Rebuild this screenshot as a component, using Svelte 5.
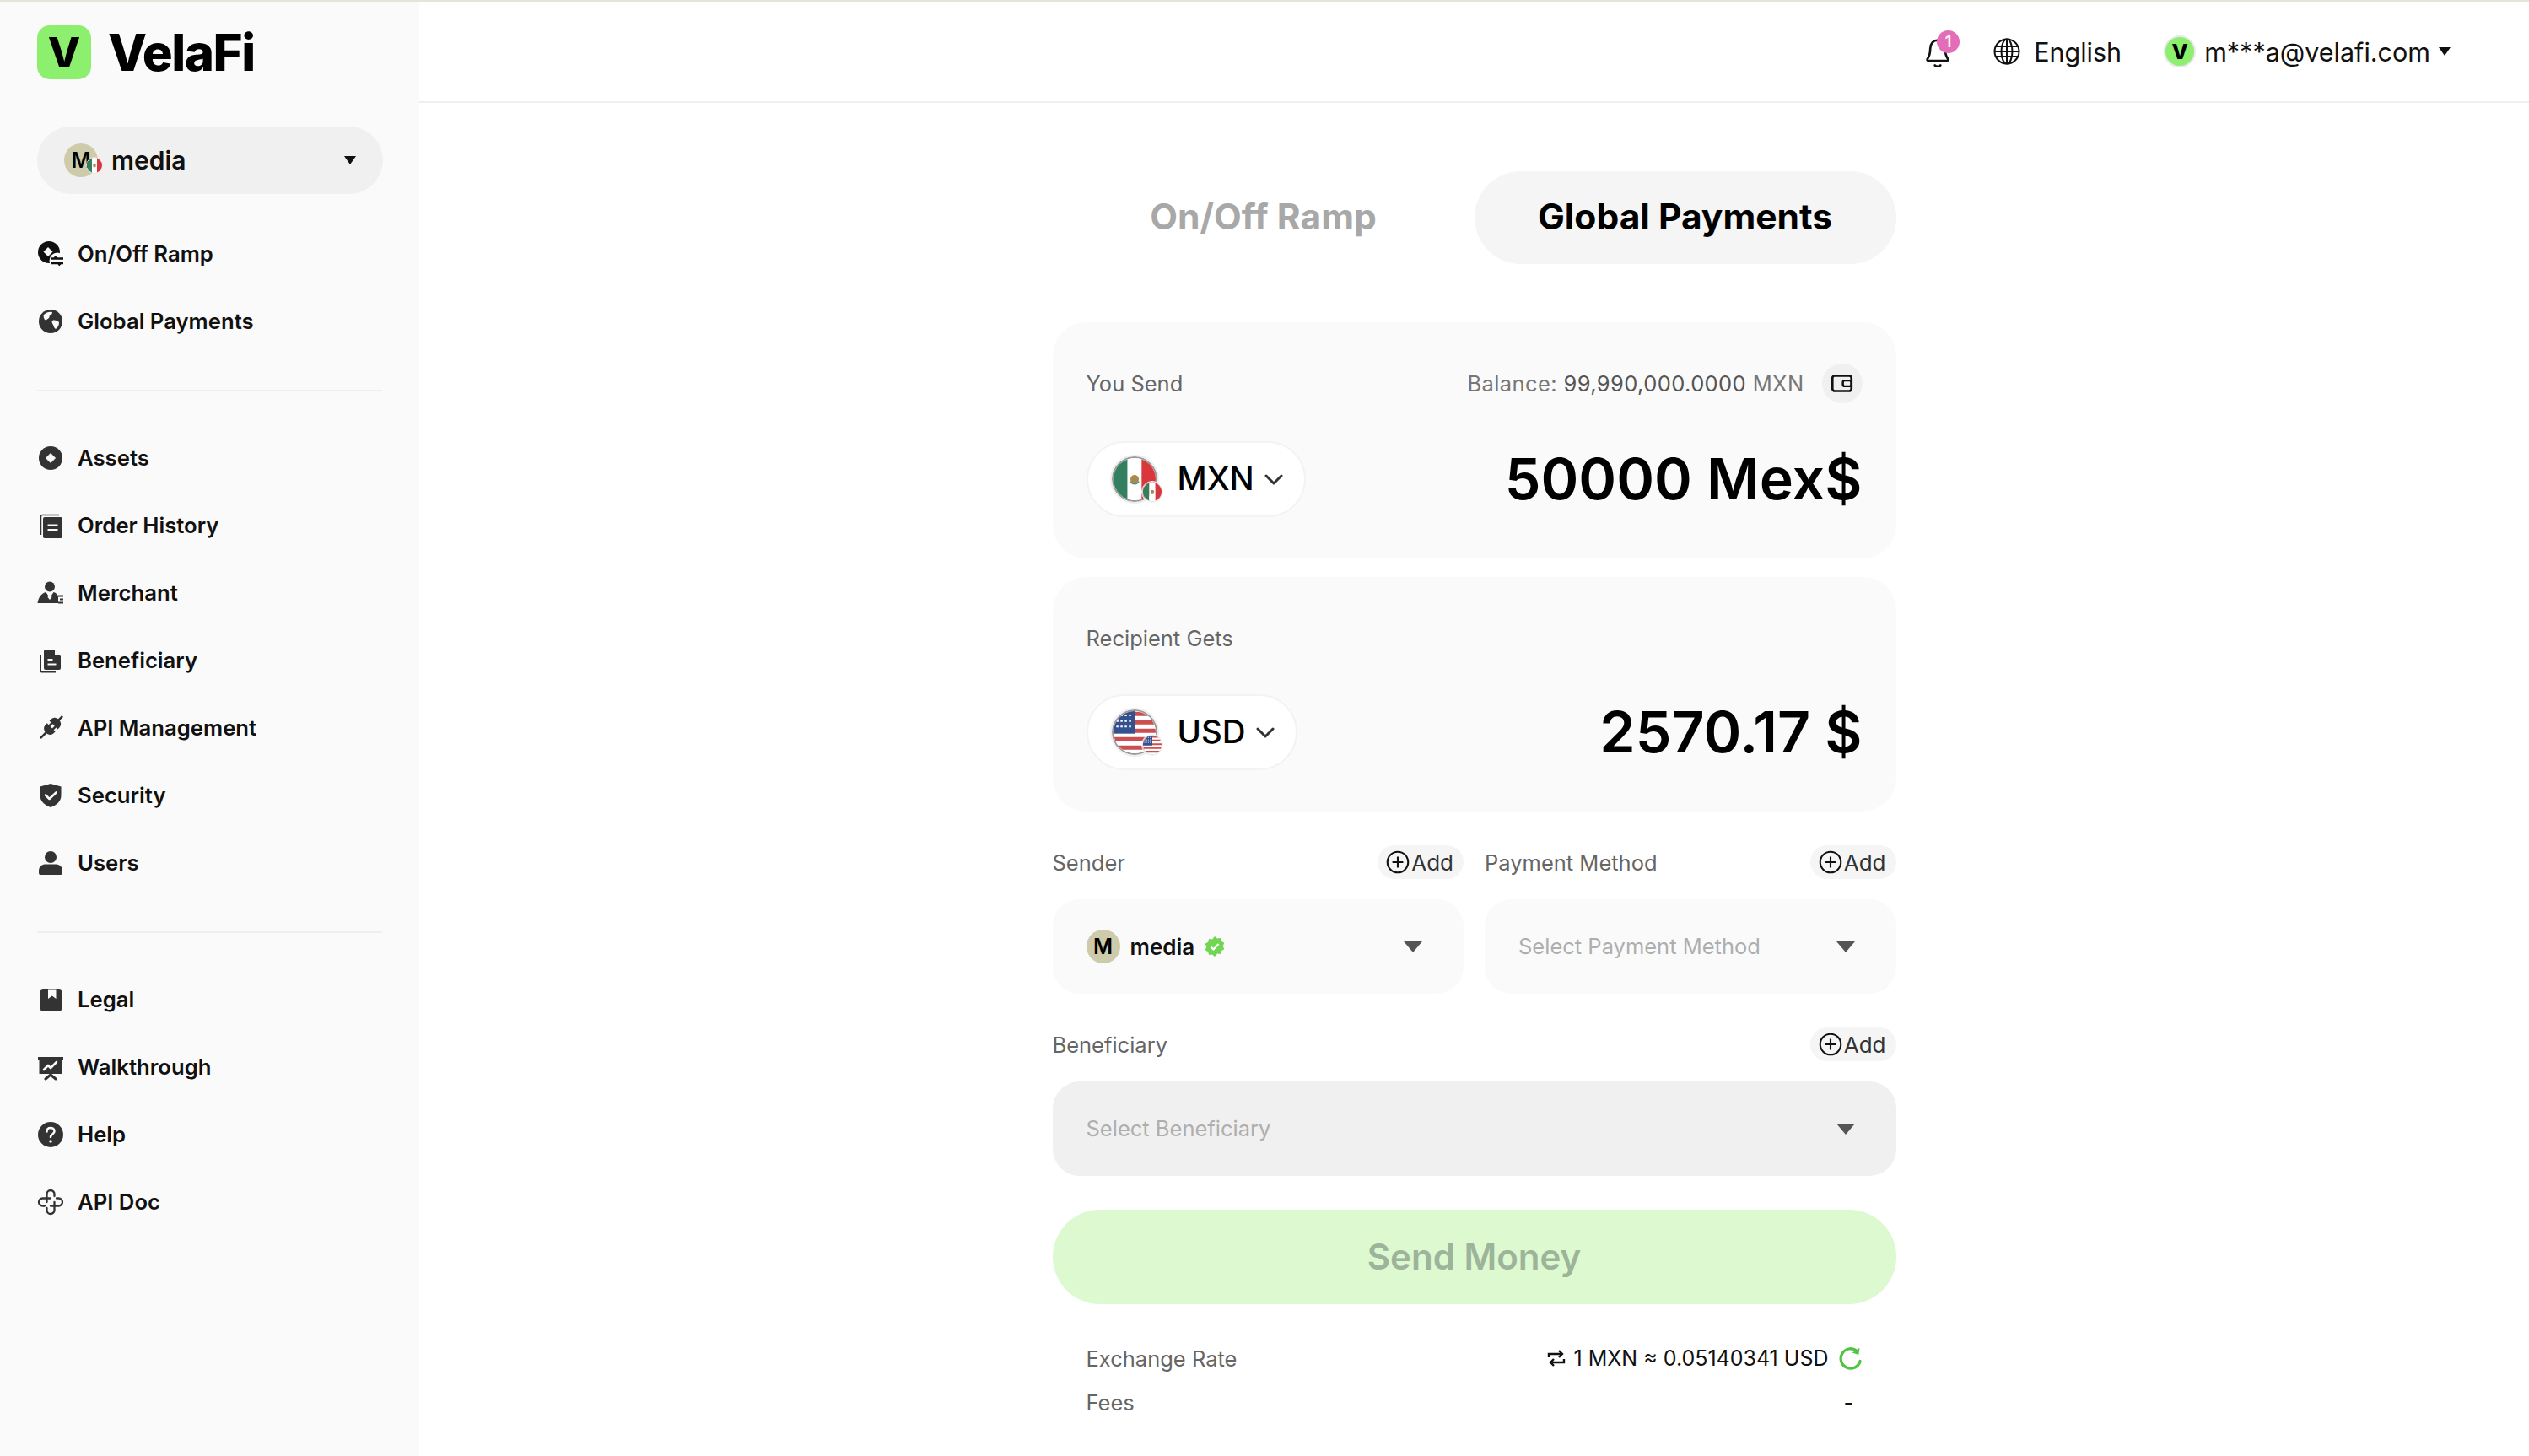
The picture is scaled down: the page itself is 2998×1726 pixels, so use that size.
<script>
  const groups = [
    [{ k: 'ramp', t: 'On/Off Ramp' }, { k: 'globe', t: 'Global Payments' }],
    [
      { k: 'assets', t: 'Assets' },
      { k: 'orders', t: 'Order History' },
      { k: 'merchant', t: 'Merchant' },
      { k: 'benef', t: 'Beneficiary' },
      { k: 'api', t: 'API Management' },
      { k: 'security', t: 'Security' },
      { k: 'users', t: 'Users' }
    ],
    [
      { k: 'legal', t: 'Legal' },
      { k: 'walk', t: 'Walkthrough' },
      { k: 'help', t: 'Help' },
      { k: 'doc', t: 'API Doc' }
    ]
  ];
</script>

{#snippet navIcon(k)}
  <svg class="nav-icon" viewBox="0 0 32 32" aria-hidden="true">
    {#if k === 'ramp'}
      <circle cx="14" cy="14" r="13" fill="#111" />
      <path d="M13 8l5.5 5.5L13 19l-5.5-5.5z" fill="#fafafa" />
      <circle cx="24" cy="24" r="9.5" fill="#fafafa" />
      <path d="M17 21.5h14M20 21.5l2.5-2.5M17 27h14M28 27l-2.5 2.5" fill="none" stroke="#111" stroke-width="2.4" />
    {:else if k === 'globe'}
      <circle cx="16" cy="16" r="14" fill="#333" />
      <path d="M8 8c3-3 7-4 10-3 0 2-1 3-3 4l-1 3c-2 1-3 3-5 2-1-2-2-4-1-6zM18 15c3-1 6 0 8 2 0 3-1 6-4 8-2-1-2-3-3-5-1-2-2-3-1-5z" fill="#fafafa" />
    {:else if k === 'assets'}
      <circle cx="16" cy="16" r="14" fill="#333" />
      <path d="M16 10.500l5.500 5.500-5.500 5.500-5.500-5.500z" fill="#fafafa" stroke="#fafafa" stroke-linejoin="round" />
    {:else if k === 'orders'}
      <path d="M4.500 27V5a1.500 1.500 0 0 1 1.500-1.500h20" fill="none" stroke="#333" stroke-width="1.500" />
      <rect x="7" y="6" width="23" height="25" rx="2" fill="#333" />
      <path d="M12.500 15.500h12M12.500 21h12" stroke="#fafafa" stroke-width="2.200" />
    {:else if k === 'merchant'}
      <circle cx="15" cy="8.500" r="6" fill="#333" />
      <path d="M0.500 28c1-7 5-12 10-13l4.500 7 4.500-7c3 .7 5 3 6.500 6v7z" fill="#333" />
      <path d="M13 15h4l-.8 3 1.300 3-2.500 3-2.500-3 1.300-3z" fill="#fafafa" />
      <path d="M25 19h7v9h-7" fill="#fafafa" />
      <path d="M25 19.500h6M27 23.500h4M25 27.500h6" stroke="#333" stroke-width="1.800" />
    {:else if k === 'benef'}
      <path d="M4 10v18a1.500 1.500 0 0 0 1.500 1.500H22" fill="none" stroke="#333" stroke-width="2" />
      <path d="M8 5a2 2 0 0 1 2-2h10l8 8v14a2 2 0 0 1-2 2H10a2 2 0 0 1-2-2z" fill="#333" />
      <path d="M21 3.500v6.500h6.500z" fill="#fafafa" />
      <path d="M12.500 15h6M12.500 20.500h10" stroke="#fafafa" stroke-width="2" />
    {:else if k === 'api'}
      <g transform="rotate(45 16 16)">
        <path d="M9 11V8a7 6 0 0 1 14 0v3z" fill="#333" />
        <path d="M16 3v-6" stroke="#333" stroke-width="2.600" stroke-linecap="round" />
        <path d="M9 15h14v3a7 6 0 0 1-14 0z" fill="#333" />
        <path d="M13 15v-3.500M19 15v-3.500M16 24v8" stroke="#333" stroke-width="2.600" stroke-linecap="round" />
      </g>
    {:else if k === 'security'}
      <path d="M16 2l12.500 3.500V16c0 7-5.500 11.500-12.500 14C9 27.500 3.500 23 3.500 16V5.500z" fill="#333" />
      <path d="M10 15.500l4.500 4.500 8-7.500" fill="none" stroke="#fafafa" stroke-width="2.600" stroke-linecap="round" stroke-linejoin="round" />
    {:else if k === 'users'}
      <circle cx="16" cy="9" r="7" fill="#333" />
      <path d="M2 25c0-5 4-7.500 8-7.500h12c4 0 8 2.500 8 7.500v3a2 2 0 0 1-2 2H4a2 2 0 0 1-2-2z" fill="#333" />
    {:else if k === 'legal'}
      <rect x="4" y="3" width="25" height="27" rx="3" fill="#333" />
      <path d="M13 3.500h9.500V15l-4.700-3.500-4.800 3.500z" fill="#fafafa" />
    {:else if k === 'walk'}
      <path d="M1 4h30v3.500h-1.500V24h-27V7.500H1z" fill="#333" />
      <path d="M8 19l5-5 3 3 7-7" fill="none" stroke="#fafafa" stroke-width="2.600" stroke-linecap="round" stroke-linejoin="round" />
      <path d="M10 30l6-5 6 5" fill="none" stroke="#333" stroke-width="3" stroke-linecap="round" />
    {:else if k === 'help'}
      <circle cx="16" cy="16" r="15" fill="#333" />
      <path d="M11.500 12.500c0-3 2-4.500 4.500-4.500s4.500 1.600 4.500 4c0 3.500-4.500 3.500-4.500 7" fill="none" stroke="#fafafa" stroke-width="2.600" stroke-linecap="round" />
      <circle cx="16" cy="24" r="1.800" fill="#fafafa" />
    {:else if k === 'doc'}
      <path d="M11.500 16V6.500a4.500 4.500 0 0 1 9 0V9M16 20.500h9.500a4.500 4.500 0 0 0 0-9H23M20.500 16v9.500a4.500 4.500 0 0 1-9 0V23M16 11.500H6.500a4.500 4.500 0 0 0 0 9H9" fill="none" stroke="#333" stroke-width="2.300" stroke-linecap="round" />
    {/if}
  </svg>
{/snippet}

{#snippet mexico()}
  <svg viewBox="0 0 30 30" aria-hidden="true">
    <rect width="10" height="30" fill="#32805f" />
    <rect x="10" width="10" height="30" fill="#fff" />
    <rect x="20" width="10" height="30" fill="#d8383d" />
    <circle cx="15" cy="15" r="3" fill="#a98a4a" />
    <path d="M12 16.500c1 2.500 5 2.500 6 0" fill="none" stroke="#5d9178" stroke-width="1" />
  </svg>
{/snippet}

{#snippet usa()}
  <svg viewBox="0 0 30 30" aria-hidden="true">
    <rect width="30" height="30" fill="#fff" />
    <path d="M0 2h30M0 8h30M0 14h30M0 20h30M0 26h30" stroke="#cc4f50" stroke-width="3" />
    <rect width="15" height="16" fill="#34518e" />
    <path d="M2 3h11M2 7h11M2 11h11" stroke="#fff" stroke-width="1.200" stroke-dasharray="1.500 1.500" />
  </svg>
{/snippet}

{#snippet coin(flag)}
  <span class="coin">
    <span class="flag big">{@render flag()}</span>
    <span class="flag small">{@render flag()}</span>
  </span>
{/snippet}

{#snippet add()}
  <button class="add">
    <svg viewBox="0 0 24 24" aria-hidden="true">
      <circle cx="12" cy="12" r="10.500" fill="none" stroke="#111" stroke-width="1.800" />
      <path d="M12 6.500v11M6.500 12h11" stroke="#111" stroke-width="1.800" />
    </svg>
    <span>Add</span>
  </button>
{/snippet}

{#snippet chevron()}
  <svg class="chev" viewBox="0 0 22 13" aria-hidden="true">
    <path d="M2 2l9 9 9-9" fill="none" stroke="#333" stroke-width="3" stroke-linecap="round" stroke-linejoin="round" />
  </svg>
{/snippet}

{#snippet caret()}
  <svg class="caret" viewBox="0 0 24 14" aria-hidden="true"><path d="M1 1h22L12 14z" fill="#555" /></svg>
{/snippet}

<div class="app">
  <aside>
    <div class="logo">
      <span class="mark">V</span>
      <span class="word">VelaFi</span>
    </div>
    <div class="org">
      <span class="avatar">M<span class="flag tiny">{@render mexico()}</span></span>
      <span class="org-name">media</span>
      <svg class="org-caret" viewBox="0 0 14 10" aria-hidden="true"><path d="M0 0h14L7 10z" fill="#111" /></svg>
    </div>
    {#each groups as group, i}
      {#if i > 0}<hr />{/if}
      <nav>
        {#each group as item}
          <div class="nav-item">{@render navIcon(item.k)}<span>{item.t}</span></div>
        {/each}
      </nav>
    {/each}
  </aside>

  <div class="main">
    <header>
      <span class="bell">
        <svg viewBox="0 0 32 40" aria-hidden="true">
          <path d="M5 28c2-3 3-5 3-11 0-5 3-9 8-9s8 4 8 9c0 6 1 8 3 11 .6 1 0 2-1 2H6c-1 0-1.600-1-1-2z" fill="none" stroke="#111" stroke-width="2.400" />
          <path d="M13 35c1.500 1.500 4.500 1.500 6 0" fill="none" stroke="#111" stroke-width="2.400" stroke-linecap="round" />
        </svg>
        <span class="badge">1</span>
      </span>
      <span class="lang">
        <svg viewBox="0 0 32 32" aria-hidden="true">
          <g fill="none" stroke="#111" stroke-width="2">
            <circle cx="16" cy="16" r="14.500" />
            <ellipse cx="16" cy="16" rx="6.500" ry="14.500" />
            <path d="M16 1.500v29M3 10h26M3 22h26M1.500 16h29" />
          </g>
        </svg>
        English
      </span>
      <span class="user">
        <span class="user-mark">V</span>
        m***a@velafi.com
        <svg class="user-caret" viewBox="0 0 14 10" aria-hidden="true"><path d="M0 0h14L7 10z" fill="#111" /></svg>
      </span>
    </header>

    <main>
      <div class="tabs">
        <div class="tab">On/Off Ramp</div>
        <div class="tab active">Global Payments</div>
      </div>

      <section class="card send">
        <div class="top">
          <span class="label">You Send</span>
          <span class="balance">
            <span>Balance: <b>99,990,000.0000</b> MXN</span>
            <span class="wallet">
              <svg viewBox="0 0 24 24" aria-hidden="true">
                <rect x="2" y="4" width="20" height="16" rx="2.500" fill="none" stroke="#111" stroke-width="2.400" />
                <rect x="13" y="9" width="9" height="6" rx="2" fill="none" stroke="#111" stroke-width="2.200" />
              </svg>
            </span>
          </span>
        </div>
        <div class="line">
          <div class="pill">{@render coin(mexico)}<span class="code">MXN</span>{@render chevron()}</div>
          <div class="amount">50000 Mex$</div>
        </div>
      </section>

      <section class="card">
        <div class="top"><span class="label">Recipient Gets</span></div>
        <div class="line">
          <div class="pill">{@render coin(usa)}<span class="code">USD</span>{@render chevron()}</div>
          <div class="amount">2570.17 $</div>
        </div>
      </section>

      <div class="pair">
        <div>
          <div class="field-head"><span class="label">Sender</span>{@render add()}</div>
          <div class="select">
            <span class="sender">
              <span class="avatar small-av">M</span>
              <strong>media</strong>
              <svg class="verified" viewBox="0 0 24 24" aria-hidden="true">
                <path d="M12 0l3 2.500 3.900-.5 1 3.800 3.400 2-1.500 3.700 1.500 3.700-3.400 2-1 3.800-3.900-.5L12 24l-3-2.500-3.900.5-1-3.800-3.400-2 1.500-3.700L.7 8.800l3.400-2 1-3.800 3.900.5z" fill="#72d653" />
                <path d="M7.500 12.500l3 3 6-6.500" fill="none" stroke="#fff" stroke-width="2.200" />
              </svg>
            </span>
            {@render caret()}
          </div>
        </div>
        <div>
          <div class="field-head"><span class="label">Payment Method</span>{@render add()}</div>
          <div class="select"><span class="placeholder">Select Payment Method</span>{@render caret()}</div>
        </div>
      </div>

      <div class="field-head benef"><span class="label">Beneficiary</span>{@render add()}</div>
      <div class="select disabled"><span class="placeholder">Select Beneficiary</span>{@render caret()}</div>

      <button class="submit">Send Money</button>

      <div class="info">
        <span class="label">Exchange Rate</span>
        <span class="rate">
          <svg class="swap" viewBox="0 0 24 24" aria-hidden="true">
            <path d="M3 11V7h16M15 3l4 4-4 4M21 13v4H5M9 21l-4-4 4-4" fill="none" stroke="#111" stroke-width="2.400" />
          </svg>
          1 MXN ≈ 0.05140341 USD
          <svg class="refresh" viewBox="0 0 24 24" aria-hidden="true">
            <path d="M18 4.500A10 10 0 1 0 21.500 15" fill="none" stroke="#4fc444" stroke-width="2.800" stroke-linecap="round" />
            <path d="M13.500 6.500L20 8.500l1-7z" fill="#4fc444" />
          </svg>
        </span>
      </div>
      <div class="info">
        <span class="label">Fees</span>
        <span class="dash">-</span>
      </div>
    </main>
  </div>
</div>

<style>
  :global(body) {
    font-family: Inter, 'Noto Sans', sans-serif;
    background: #fff;
    color: #111;
  }
  .app {
    display: flex;
    height: 1726px;
    overflow: hidden;
    border-top: 2px solid #e3e5d8;
    box-sizing: border-box;
  }
  aside {
    width: 497px;
    flex-shrink: 0;
    box-sizing: border-box;
    background: #fafafa;
    padding: 28px 44px 0;
  }
  .logo {
    display: flex;
    align-items: center;
    gap: 20px;
    height: 64px;
  }
  .mark {
    width: 64px;
    height: 64px;
    border-radius: 15px;
    background: #8cf06e;
    display: flex;
    align-items: center;
    justify-content: center;
    font-size: 50px;
    font-weight: 800;
    color: #000;
  }
  .word {
    font-size: 60px;
    font-weight: 800;
    letter-spacing: -1.5px;
    color: #000;
  }
  .org {
    margin-top: 56px;
    height: 80px;
    width: 410px;
    border-radius: 40px;
    background: #f0f0f0;
    display: flex;
    align-items: center;
    padding: 0 32px;
    box-sizing: border-box;
  }
  .avatar {
    position: relative;
    width: 40px;
    height: 40px;
    flex-shrink: 0;
    border-radius: 50%;
    background: #cdcbaa;
    display: flex;
    align-items: center;
    justify-content: center;
    font-size: 25px;
    font-weight: 600;
    color: #000;
  }
  .org-name {
    margin-left: 16px;
    font-size: 30px;
    font-weight: 600;
    flex: 1;
  }
  .org-caret {
    width: 14px;
    height: 10px;
  }
  .flag {
    display: block;
    border-radius: 50%;
    overflow: hidden;
  }
  .flag svg {
    display: block;
    width: 100%;
    height: 100%;
  }
  .flag.tiny {
    position: absolute;
    left: 26px;
    top: 16px;
    width: 20px;
    height: 20px;
    border: 1px solid #e8e8e8;
    box-sizing: border-box;
  }
  nav {
    display: flex;
    flex-direction: column;
    margin-top: 39px;
  }
  aside > nav:nth-of-type(1) {
    margin-top: 31px;
  }
  .nav-item {
    height: 80px;
    display: flex;
    align-items: center;
    gap: 16px;
    font-size: 25.700px;
    font-weight: 600;
    color: #111;
  }
  .nav-item span {
    padding-bottom: 1px;
  }
  .nav-icon {
    width: 32px;
    height: 32px;
    flex-shrink: 0;
  }
  hr {
    border: 0;
    height: 2px;
    background: #efefef;
    margin: 41px 0 0;
  }
  .main {
    flex: 1;
    min-width: 0;
  }
  header {
    height: 118px;
    border-bottom: 2px solid #efefef;
    display: flex;
    align-items: center;
    justify-content: flex-end;
    padding-right: 93px;
    font-size: 30.500px;
    color: #111;
  }
  .bell {
    position: relative;
    width: 36px;
    height: 44px;
    margin-right: 48px;
  }
  .bell svg {
    width: 36px;
    height: 44px;
    display: block;
  }
  .badge {
    position: absolute;
    left: 17px;
    top: -3px;
    width: 27px;
    height: 27px;
    border-radius: 50%;
    background: #e36db8;
    color: #fff;
    font-size: 18px;
    font-weight: 600;
    display: flex;
    align-items: center;
    justify-content: center;
  }
  .lang {
    display: flex;
    align-items: center;
    gap: 16px;
    margin-right: 50px;
  }
  .lang svg {
    width: 32px;
    height: 34px;
  }
  .user {
    display: flex;
    align-items: center;
    gap: 10px;
  }
  .user-mark {
    width: 38px;
    height: 38px;
    border-radius: 50%;
    background: #8cf06e;
    border: 2px solid #e8e8e8;
    box-sizing: border-box;
    display: flex;
    align-items: center;
    justify-content: center;
    font-size: 25px;
    font-weight: 800;
    color: #000;
  }
  .user-caret {
    width: 14px;
    height: 10px;
  }
  main {
    width: 1000px;
    margin: 0 auto;
    padding-top: 81px;
  }
  .tabs {
    display: grid;
    grid-template-columns: 1fr 1fr;
    margin-bottom: 69px;
  }
  .tab {
    height: 110px;
    box-sizing: border-box;
    padding-bottom: 3px;
    border-radius: 55px;
    display: flex;
    align-items: center;
    justify-content: center;
    font-size: 42.500px;
    font-weight: 700;
    color: #a8a8a8;
  }
  .tab.active {
    background: #f5f5f5;
    color: #000;
  }
  .card {
    background: #fafafa;
    border-radius: 40px;
    padding: 49px 40px 49px;
    margin-bottom: 22px;
  }
  .top {
    height: 47px;
    display: flex;
    align-items: center;
    justify-content: space-between;
    margin-bottom: 43px;
  }
  .send .top {
    margin-bottom: 45px;
  }
  .label {
    font-size: 25.500px;
    color: #666;
  }
  .balance {
    display: flex;
    align-items: center;
    font-size: 25.500px;
    letter-spacing: 0.4px;
    color: #777;
  }
  .balance b {
    font-weight: 400;
    color: #555;
  }
  .wallet {
    width: 48px;
    height: 47px;
    margin-left: 21px;
    border-radius: 50%;
    background: #f0f0f0;
    display: flex;
    align-items: center;
    justify-content: center;
  }
  .wallet svg {
    width: 27px;
    height: 27px;
  }
  .line {
    display: flex;
    align-items: center;
    justify-content: space-between;
  }
  .pill {
    height: 90px;
    box-sizing: border-box;
    border: 2px solid #f3f3f3;
    border-radius: 45px;
    background: #fff;
    display: flex;
    align-items: center;
    padding: 0 25px 0 26px;
    font-size: 38.500px;
    font-weight: 500;
    color: #000;
  }
  .code {
    padding-bottom: 3px;
  }
  .coin {
    position: relative;
    width: 62px;
    height: 58px;
    margin-right: 18px;
  }
  .flag.big {
    width: 54px;
    height: 54px;
    box-sizing: border-box;
    border: 2px solid #999;
    outline: 2px solid #eee;
    margin: 2px;
  }
  .flag.small {
    position: absolute;
    left: 38px;
    top: 32px;
    width: 24px;
    height: 24px;
    border: 1px solid #ddd;
    outline: 1px solid #f4f4f4;
    box-sizing: border-box;
  }
  .chev {
    width: 22px;
    height: 13px;
    margin-left: 12px;
  }
  .amount {
    font-size: 68px;
    font-weight: 600;
    color: #000;
    padding-bottom: 3px;
  }
  .pair {
    display: grid;
    grid-template-columns: 1fr 1fr;
    gap: 25px;
    margin-top: 40px;
  }
  .field-head {
    height: 40px;
    display: flex;
    align-items: center;
    justify-content: space-between;
    margin-bottom: 24px;
  }
  .field-head.benef {
    margin-top: 40px;
  }
  .add {
    width: 102px;
    height: 40px;
    padding: 0 12px 0 0;
    border: 0;
    border-radius: 20px;
    background: #f5f5f5;
    display: flex;
    align-items: center;
    justify-content: flex-end;
    gap: 2px;
    font: inherit;
    font-size: 26px;
    color: #333;
  }
  .add svg {
    width: 28px;
    height: 28px;
  }
  .select {
    height: 112px;
    box-sizing: border-box;
    border-radius: 32px;
    background: #fafafa;
    display: flex;
    align-items: center;
    justify-content: space-between;
    padding: 0 48px 0 40px;
  }
  .select.disabled {
    background: #f0f0f0;
  }
  .sender {
    display: flex;
    align-items: center;
    gap: 12px;
    font-size: 26px;
  }
  .sender strong {
    font-weight: 600;
  }
  .verified {
    width: 24px;
    height: 24px;
  }
  .placeholder {
    font-size: 25.500px;
    color: #aeaeae;
    padding-bottom: 2px;
  }
  .caret {
    width: 24px;
    height: 14px;
  }
  .submit {
    display: block;
    width: 100%;
    height: 112px;
    margin-top: 40px;
    padding-bottom: 3px;
    border: 0;
    border-radius: 56px;
    background: #dcf9d0;
    color: #9db49a;
    font: inherit;
    font-size: 42px;
    font-weight: 600;
  }
  .info {
    height: 52px;
    display: flex;
    align-items: center;
    justify-content: space-between;
    padding: 0 40px;
  }
  .submit + .info {
    margin-top: 38px;
  }
  .rate {
    display: flex;
    align-items: center;
    gap: 8px;
    font-size: 25px;
    color: #111;
  }
  .swap {
    width: 24px;
    height: 26px;
  }
  .refresh {
    width: 28px;
    height: 30px;
    margin-left: 4px;
  }
  .dash {
    font-size: 26px;
    margin-right: 10px;
  }
</style>
